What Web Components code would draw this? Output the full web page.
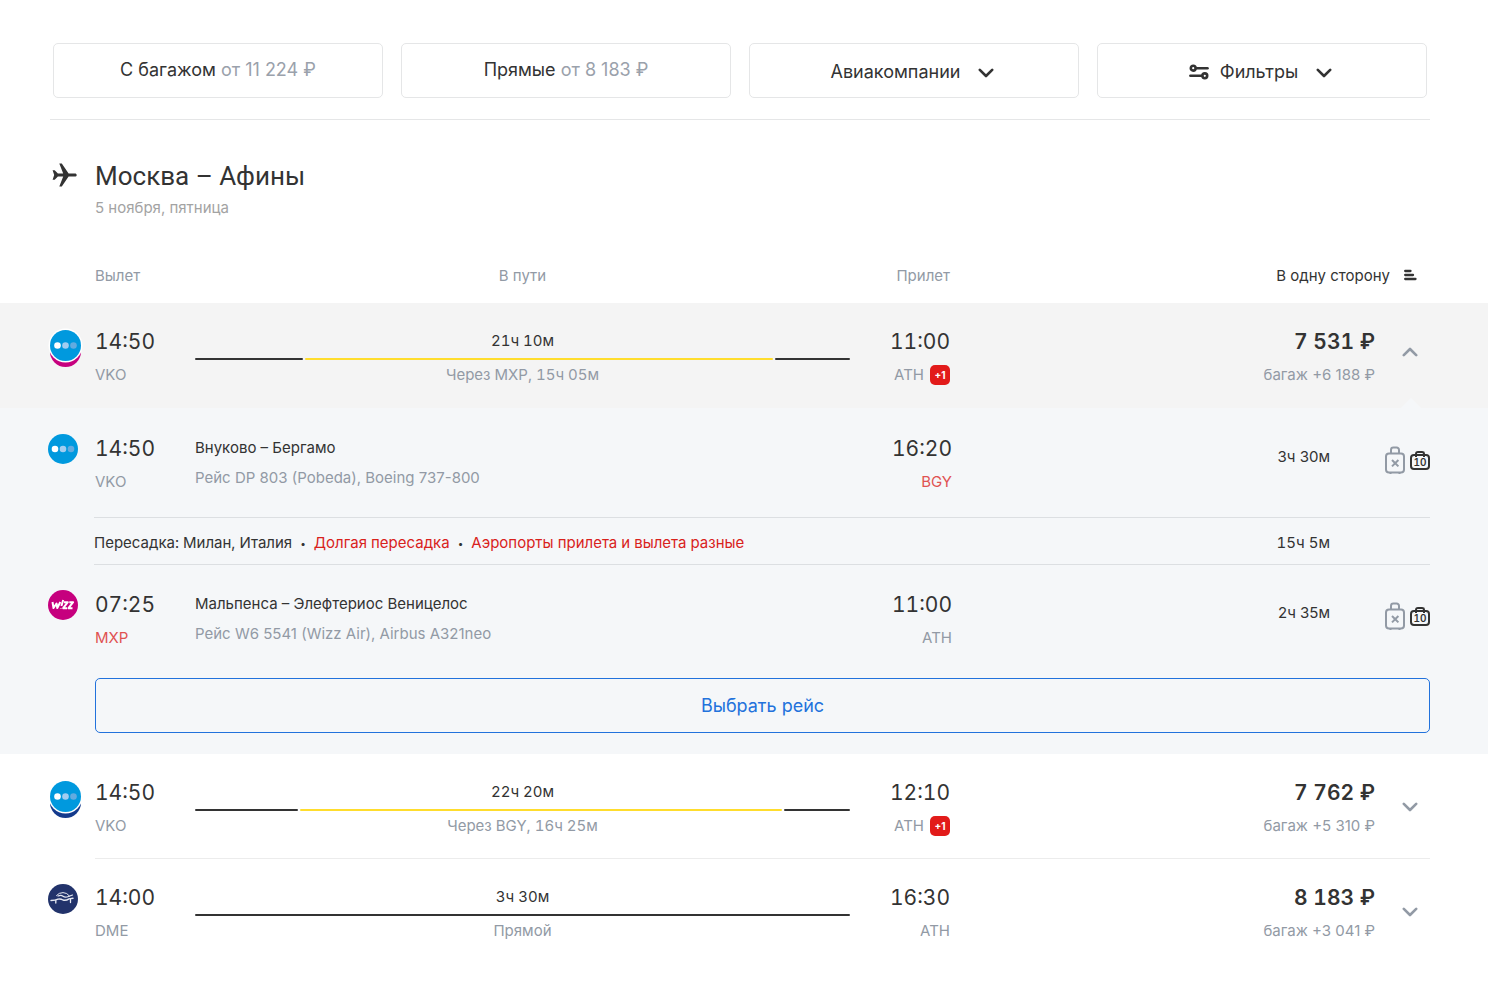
<!DOCTYPE html>
<html lang="ru">
<head>
<meta charset="utf-8">
<title>Москва – Афины</title>
<style>
  body { margin: 0; background: #fff; color: #333; font: 15px/20px Inter, "Liberation Sans", sans-serif; }
</style>
</head>
<body>
<flight-page></flight-page>
<script>
const define = (name, markup, setup) => {
  const tpl = document.createElement('template');
  tpl.innerHTML = '<style>*{box-sizing:border-box}button{font:inherit;color:inherit;background:none;border:0;padding:0;margin:0;cursor:pointer}svg{display:block}</style>' + markup;
  customElements.define(name, class extends HTMLElement {
    constructor() {
      super();
      this.attachShadow({ mode: 'open' }).append(tpl.content.cloneNode(true));
    }
    connectedCallback() {
      if (setup) setup(this, this.shadowRoot);
    }
  });
};

const icons = {
  down: ['0 0 16 10', 16, '<path d="M1.8 1.8 8 8l6.2-6.2" fill="none" stroke="currentColor" stroke-width="2.6" stroke-linecap="round" stroke-linejoin="round"/>'],
  up: ['0 0 16 10', 16, '<path d="M1.8 8.2 8 2l6.2 6.2" fill="none" stroke="currentColor" stroke-width="2.6" stroke-linecap="round" stroke-linejoin="round"/>'],
  tune: ['0 0 20 16', 20, '<g fill="none" stroke="currentColor" stroke-width="2.6" stroke-linecap="round"><circle cx="4.2" cy="4.2" r="2.4"/><path d="M7.5 4.2h11"/><circle cx="15.8" cy="11.8" r="2.4"/><path d="M1.4 11.8h11"/></g>'],
  sort: ['0 0 14 12', 14, '<path d="M2.2 2h5.3M2.2 6h7.8M2.2 10h10.3" fill="none" stroke="currentColor" stroke-width="2.3" stroke-linecap="round"/>'],
  plane: ['0 0 25 24', 25, '<path d="M.6 7.2h2.1l3.2 3.2h5.3L7.3.6h2.5l6.8 9.8h6.2c1.2 0 1.9.7 1.9 1.6s-.7 1.6-1.9 1.6h-6.2l-6.8 9.8H7.3l3.9-9.8H5.9l-3.2 3.2H.6L2.2 12z" fill="currentColor"/>'],
  bag: ['0 0 22 29', 22, '<g fill="none" stroke="currentColor" stroke-width="2"><rect x="2" y="7.5" width="18" height="19" rx="3"/><path d="M7 7.5V4a2.4 2.4 0 0 1 2.4-2.4h3.2A2.4 2.4 0 0 1 15 4v3.5M6.5 26.5V28M15.5 26.5V28"/><path d="m8 14 6.4 6.4M14.4 14 8 20.4"/></g>']
};
define('ui-icon', '<style>:host{display:block;flex:none}</style>', (el, root) => {
  const [box, width, shape] = icons[el.getAttribute('name')];
  root.innerHTML += `<svg viewBox="${box}" width="${width}" aria-hidden="true">${shape}</svg>`;
});

const dots = (x, y) => `<circle cx="${x - 8}" cy="${y}" r="3.3" fill="#fff"/><circle cx="${x}" cy="${y}" r="3.3" fill="#a3cdf0"/><circle cx="${x + 8}" cy="${y}" r="3.3" fill="#62abe0"/>`;
const double = back => `<svg width="35" height="40" viewBox="0 0 35 40"><circle cx="17.5" cy="23.5" r="15.5" fill="${back}"/><circle cx="17.5" cy="17.5" r="17" fill="#fff"/><circle cx="17.5" cy="17.5" r="15.5" fill="#0099de"/>${dots(17.5, 17.5)}</svg>`;
const logos = {
  pobeda: `<svg width="30" height="30"><circle cx="15" cy="15" r="15" fill="#0099de"/>${dots(15, 15)}</svg>`,
  'pobeda-wizz': double('#c6007e'),
  'pobeda-ryanair': double('#143a8c'),
  wizz: '<svg width="30" height="30"><circle cx="15" cy="15" r="15" fill="#c6007e"/><path d="M4.5 12 5.5 18 8.5 13.5 9.3 18 12.3 12M15.2 10l-1.8 6M12.9 18v.6M16 12.2h3.8l-4.6 6h3.8M21.3 12.2h3.8l-4.6 6h4" fill="none" stroke="#fff" stroke-width="2" stroke-linejoin="round"/></svg>',
  aegean: '<svg width="30" height="30"><circle cx="15" cy="15" r="15" fill="#22336b"/><g fill="none" stroke="#e6e9f2" stroke-linecap="round"><path d="M8.5 11.5Q11 8.6 15 8.6t6.5 3.4"/><path d="M10 12q3-1.5 5 .2t5.5.3l4-1.5" stroke-width="1.2"/><path d="M3 16.5q4.500 0 7-1.300 2.500-.7 5 .8 3 .8 6-1.200l4-.5" stroke-width="1.4"/><path d="M7.800 16.500V19M22.500 15.500v3" stroke-width="1.3"/></g></svg>'
};
define('airline-logo', '<style>:host{display:block}</style>', (el, root) => {
  root.innerHTML += logos[el.getAttribute('name')];
});

define('filter-button', `
  <style>
    :host { display: block; flex: 1 1 0; min-width: 0; }
    button { width: 100%; height: 55px; border: 1px solid #e5e6e7; border-radius: 5px; display: flex; align-items: center; justify-content: center; font-size: 18px; line-height: 24px; padding-bottom: 2px; }
    :host([menu]) button { padding: 2px 3px 0 0; gap: 11px; }
    ::slotted(small) { font-size: inherit; color: #9aa1ab; }
    button > ui-icon { margin: 3px 0 0 7px; }
  </style>
  <button type="button"><slot name="icon"></slot><span><slot></slot></span></button>`,
  (el, root) => {
    if (el.hasAttribute('menu')) root.querySelector('button').insertAdjacentHTML('beforeend', '<ui-icon name="down"></ui-icon>');
  });

define('flight-row', `
  <style>
    :host { display: block; padding: 0 58px 0 50px; }
    :host([open]) { background: #f4f4f4; }
    .row { position: relative; display: grid; grid-template-columns: 45px 100px minmax(0, 655fr) 100px minmax(0, 425fr) 55px; padding: 24px 0 23px; }
    :host([divided]) .row { background: linear-gradient(#ececec, #ececec) right bottom / calc(100% - 45px) 1px no-repeat; }
    .cell { display: flex; flex-direction: column; gap: 8px; }
    .end { align-items: flex-end; text-align: right; }
    .time, .price { font-size: 21px; line-height: 30px; font-variant-numeric: tabular-nums; }
    .price { font-weight: 600; }
    .muted { color: #929aa5; }
    .place { display: flex; gap: 6px; }
    .badge { width: 20px; height: 20px; border-radius: 5px; background: #e21b1a; color: #fff; font-size: 10px; font-weight: 700; text-align: center; }
    .path { padding-top: 4px; text-align: center; font-variant-numeric: tabular-nums; }
    .bar { display: flex; gap: 2px; height: 2px; margin: 7px 0 5px; }
    .bar i { background: #333; border-radius: 1px; }
    .bar i:nth-child(2) { background: #ffdd2d; }
    .logo { padding-top: 1px; margin-left: -2px; }
    .toggle { align-self: center; justify-self: end; width: 40px; height: 40px; display: grid; place-items: center; color: #929aa5; }
    :host([open]) .toggle { padding-bottom: 9px; }
    :host([open]) .row::after { content: ""; position: absolute; right: 9px; bottom: 0; border: 10px solid transparent; border-top: 0; border-bottom-color: #f5f7f9; }
  </style>
  <div class="row"></div>`,
  (el, root) => {
    const a = n => el.getAttribute(n);
    const legs = a('legs').split(',').map(n => `<i style="flex:${n}"></i>`).join('');
    const next = el.hasAttribute('next-day') ? '<span class="badge">+1</span>' : '';
    const open = el.hasAttribute('open');
    root.querySelector('.row').innerHTML = `
      <div class="logo"><airline-logo name="${a('logo')}"></airline-logo></div>
      <div class="cell"><span class="time">${a('depart')}</span><span class="muted">${a('from')}</span></div>
      <div class="path"><div>${a('duration')}</div><div class="bar">${legs}</div><div class="muted">${a('via')}</div></div>
      <div class="cell end"><span class="time">${a('arrive')}</span><span class="muted place">${a('to')}${next}</span></div>
      <div class="cell end"><span class="price">${a('price')}</span><span class="muted">${a('baggage')}</span></div>
      <button class="toggle" type="button" aria-expanded="${open}" aria-label="Подробнее"><ui-icon name="${open ? 'up' : 'down'}"></ui-icon></button>`;
  });

define('flight-leg', `
  <style>
    :host { display: grid; grid-template-columns: 45px 100px minmax(0, 657fr) 100px minmax(0, 378fr) 100px; }
    .cell { display: flex; flex-direction: column; gap: 8px; }
    .end { text-align: right; }
    .time { font-size: 21px; line-height: 30px; font-variant-numeric: tabular-nums; }
    .muted { color: #929aa5; }
    .alert { color: #e05252; }
    .route { padding-top: 4px; gap: 10px; }
    .length { padding-top: 13px; text-align: right; }
    airline-logo { margin-left: -2px; }
    .bags { display: flex; justify-content: flex-end; gap: 4px; padding-top: 12px; }
    .bags ui-icon { color: #929aa5; }
    .hand { position: relative; width: 20px; height: 16px; margin-top: 8px; border: 2px solid #333; border-radius: 4px; font-size: 10px; line-height: 12px; font-weight: 600; font-variant-numeric: tabular-nums; text-align: center; }
    .hand::before { content: ""; position: absolute; left: 3px; right: 3px; top: -5px; height: 4px; border: 2px solid #333; border-bottom: 0; border-radius: 3px 3px 0 0; }
  </style>`,
  (el, root) => {
    const a = n => el.getAttribute(n);
    const code = (v, n) => `<span class="${el.hasAttribute(n) ? 'alert' : 'muted'}">${v}</span>`;
    root.innerHTML += `
      <airline-logo name="${a('logo')}"></airline-logo>
      <div class="cell"><span class="time">${a('depart')}</span>${code(a('from'), 'alert-from')}</div>
      <div class="cell route"><span>${a('route')}</span><span class="muted">${a('flight')}</span></div>
      <div class="cell end"><span class="time">${a('arrive')}</span>${code(a('to'), 'alert-to')}</div>
      <div class="length">${a('duration')}</div>
      <div class="bags"><ui-icon name="bag"></ui-icon><span class="hand">10</span></div>`;
  });

define('flight-transfer', `
  <style>
    :host { display: flex; justify-content: space-between; margin: 25px 0 25px 44px; padding: 15px 100px 11px 0; border: solid #dcdfe2; border-width: 1px 0; font-variant-numeric: tabular-nums; }
    ::slotted(em) { font-style: normal; color: #d9221c; }
    ::slotted(b) { font-size: 10px; line-height: 1; vertical-align: 1px; font-weight: 400; margin: 0 4px; }
  </style>
  <span><slot></slot></span><slot name="length"></slot>`);

define('flight-details', `
  <style>
    :host { display: block; background: #f5f7f9; padding: 26px 58px 21px 50px; }
    button { display: block; width: calc(100% - 45px); height: 55px; margin: 30px 0 0 45px; border: 1px solid #2272dc; border-radius: 5px; color: #2272dc; font-size: 18px; }
  </style>
  <slot></slot><button type="button">Выбрать рейс</button>`);

define('route-heading', `
  <style>
    :host { display: grid; grid-template-columns: 45px 1fr; margin: 40px 0 48px; }
    ui-icon { margin: 3px 0 0 2px; }
    h1 { margin: 0; font: 400 26px/32px Roboto, "Liberation Sans", sans-serif; }
    p { margin: 6px 0 0; color: #a3a3a3; }
  </style>
  <ui-icon name="plane"></ui-icon><div><h1><slot></slot></h1><p><slot name="date"></slot></p></div>`);

define('column-titles', `
  <style>
    :host { display: grid; grid-template-columns: 45px 100px minmax(0, 655fr) 100px minmax(0, 480fr); color: #929aa5; padding-bottom: 17px; }
    .mid { text-align: center; }
    .end { text-align: right; }
    button { display: flex; justify-content: flex-end; align-items: center; gap: 13px; color: #333; padding-right: 13px; }
    ui-icon { padding-bottom: 2px; }
  </style>
  <span></span><span>Вылет</span><span class="mid">В пути</span><span class="end">Прилет</span>
  <button type="button">В одну сторону<ui-icon name="sort"></ui-icon></button>`);

define('flight-page', `
  <style>
    :host { display: block; }
    header { padding: 43px 58px 0 50px; }
    nav { display: flex; gap: 18px; padding: 0 3px 21px; border-bottom: 1px solid #e5e6e7; }
  </style>
  <header>
    <nav>
      <filter-button>С багажом <small>от 11 224 ₽</small></filter-button>
      <filter-button>Прямые <small>от 8 183 ₽</small></filter-button>
      <filter-button menu>Авиакомпании</filter-button>
      <filter-button menu><ui-icon slot="icon" name="tune"></ui-icon>Фильтры</filter-button>
    </nav>
    <route-heading>Москва – Афины<span slot="date">5 ноября, пятница</span></route-heading>
    <column-titles></column-titles>
  </header>
  <main>
    <flight-row open next-day logo="pobeda-wizz" depart="14:50" from="VKO" duration="21ч 10м" legs="108,470,75" via="Через MXP, 15ч 05м" arrive="11:00" to="ATH" price="7 531 ₽" baggage="багаж +6 188 ₽"></flight-row>
    <flight-details>
      <flight-leg logo="pobeda" depart="14:50" from="VKO" route="Внуково – Бергамо" flight="Рейс DP 803 (Pobeda), Boeing 737-800" arrive="16:20" to="BGY" alert-to duration="3ч 30м"></flight-leg>
      <flight-transfer>Пересадка: Милан, Италия <b>•</b> <em>Долгая пересадка</em> <b>•</b> <em>Аэропорты прилета и вылета разные</em><span slot="length">15ч 5м</span></flight-transfer>
      <flight-leg logo="wizz" depart="07:25" from="MXP" alert-from route="Мальпенса – Элефтериос Веницелос" flight="Рейс W6 5541 (Wizz Air), Airbus A321neo" arrive="11:00" to="ATH" duration="2ч 35м"></flight-leg>
    </flight-details>
    <flight-row divided next-day logo="pobeda-ryanair" depart="14:50" from="VKO" duration="22ч 20м" legs="103,482,66" via="Через BGY, 16ч 25м" arrive="12:10" to="ATH" price="7 762 ₽" baggage="багаж +5 310 ₽"></flight-row>
    <flight-row logo="aegean" depart="14:00" from="DME" duration="3ч 30м" legs="1" via="Прямой" arrive="16:30" to="ATH" price="8 183 ₽" baggage="багаж +3 041 ₽"></flight-row>
  </main>`);
</script>
</body>
</html>
